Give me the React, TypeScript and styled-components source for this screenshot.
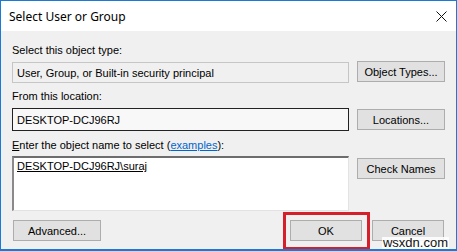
import styled, { createGlobalStyle } from "styled-components";

const GlobalStyle = createGlobalStyle`
  html, body {
    margin: 0;
    padding: 0;
    background: #ffffff;
  }
`;

const Window = styled.div`
  width: 457px;
  height: 251px;
  box-sizing: border-box;
  border: 1px solid #1a7ad6;
  border-bottom-width: 2px;
  display: flex;
  flex-direction: column;
  position: relative;
  font-family: Tahoma, "Liberation Sans", Arial, sans-serif;
  font-size: 11px;
  color: #000;
  overflow: hidden;
`;

const TitleBar = styled.div`
  height: 30px;
  background: #ffffff;
  display: flex;
  align-items: center;
  justify-content: space-between;
  padding: 0 8px 0 8px;
  flex-shrink: 0;
`;

const Title = styled.span`
  font-family: "Segoe UI", "Noto Sans", "Open Sans", sans-serif;
  font-size: 12px;
  color: #000;
  padding-top: 1px;
`;

const CloseIcon = styled.svg`
  width: 11px;
  height: 11px;
  margin-right: 1px;
  margin-top: 1px;
`;

const Body = styled.div`
  flex: 1;
  background: #f0f0f0;
  padding: 13px 12px 0 11px;
  display: flex;
  flex-direction: column;
`;

const Label = styled.div<{ $gap?: number; $below?: number }>`
  height: 13px;
  line-height: 13px;
  margin-top: ${({ $gap }) => $gap ?? 0}px;
  margin-bottom: ${({ $below }) => $below ?? 5}px;
  white-space: nowrap;
`;

const Row = styled.div`
  display: grid;
  grid-template-columns: 337px 88px;
  column-gap: 8px;
  align-items: start;
`;

const Field = styled.div<{ $dark?: boolean }>`
  height: ${({ $dark }) => ($dark ? 23 : 21)}px;
  box-sizing: border-box;
  border: 1px solid ${({ $dark }) => ($dark ? "#222" : "#c6c6c6")};
  background: ${({ $dark }) => ($dark ? "#f8f8f8" : "#f0f0f0")};
  display: flex;
  align-items: center;
  padding-left: 4px;
  white-space: nowrap;
`;

const MultiField = styled.div`
  height: 55px;
  box-sizing: border-box;
  background: #ffffff;
  border-top: 2px solid #6d6d6d;
  border-left: 2px solid #8a8a8a;
  border-right: 1px solid #e3e3e3;
  border-bottom: 1px solid #e3e3e3;
  padding: 2px 3px;
  line-height: 13px;
`;

const Underlined = styled.span`
  text-decoration: underline;
`;

const LinkText = styled.span`
  color: #0066cc;
  text-decoration: underline;
`;

const Button = styled.button<{ $top?: number }>`
  height: 21px;
  width: 88px;
  box-sizing: border-box;
  margin-top: ${({ $top }) => $top ?? 0}px;
  border: 1px solid #adadad;
  background: #e1e1e1;
  font-family: inherit;
  font-size: 11px;
  color: #000;
  padding: 0;
  display: flex;
  align-items: center;
  justify-content: center;
`;

const Footer = styled.div`
  margin-top: 9px;
  display: flex;
  align-items: center;
`;

const FooterButton = styled(Button)<{ $w: number }>`
  width: ${({ $w }) => $w}px;
`;

const Spacer = styled.div`
  flex: 1;
`;

const Highlight = styled.div`
  border: 3px solid #d5202b;
  padding: 5px 5px 6px 4px;
  margin: -8px 2px -9px 0;
  display: flex;
`;

const Watermark = styled.div`
  position: absolute;
  right: 7px;
  bottom: 0px;
  font-family: "Liberation Sans", Arial, sans-serif;
  font-size: 13px;
  line-height: 12px;
  color: #111;
  background: rgba(255, 255, 255, 0.85);
  padding: 0 1px;
`;

export default function App() {
  return (
    <>
      <GlobalStyle />
      <Window>
        <TitleBar>
          <Title>Select User or Group</Title>
          <CloseIcon viewBox="0 0 11 11">
            <path d="M0.5 0.5 L10.5 10.5 M10.5 0.5 L0.5 10.5" stroke="#111" strokeWidth="1" fill="none" />
          </CloseIcon>
        </TitleBar>
        <Body>
          <Label>Select this object type:</Label>
          <Row>
            <Field>User, Group, or Built-in security principal</Field>
            <Button $top={-1}>Object Types...</Button>
          </Row>
          <Label $gap={7}>From this location:</Label>
          <Row>
            <Field $dark>DESKTOP-DCJ96RJ</Field>
            <Button $top={1}>Locations...</Button>
          </Row>
          <Label $gap={8} $below={4}>
            <Underlined>E</Underlined>nter the object name to select (<LinkText>examples</LinkText>):
          </Label>
          <Row>
            <MultiField>
              <Underlined>DESKTOP-DCJ96RJ\suraj</Underlined>
            </MultiField>
            <Button $top={2}>Check Names</Button>
          </Row>
          <Footer>
            <FooterButton $w={88} style={{ marginLeft: 1 }}>Advanced...</FooterButton>
            <Spacer />
            <Highlight>
              <FooterButton $w={72}>OK</FooterButton>
            </Highlight>
            <FooterButton $w={72}>Cancel</FooterButton>
          </Footer>
        </Body>
        <Watermark>wsxdn.com</Watermark>
      </Window>
    </>
  );
}
